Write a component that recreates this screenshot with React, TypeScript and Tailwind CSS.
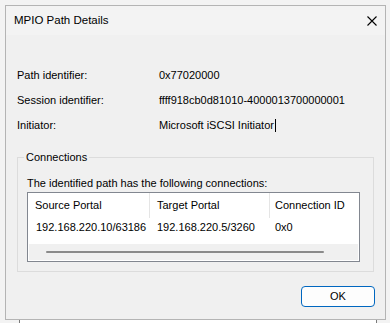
import React from 'react';

const rows = [
  { label: 'Path identifier:', value: '0x77020000' },
  { label: 'Session identifier:', value: 'ffff918cb0d81010-4000013700000001' },
  { label: 'Initiator:', value: 'Microsoft iSCSI Initiator', caret: true },
];

export default function App() {
  return (
    <div className="w-[390px] h-[323px] overflow-hidden bg-[#f3f3f3] pt-[5px] pl-[5px] text-black font-['Liberation_Sans',Arial,sans-serif]">
      {/* Dialog window */}
      <div className="w-[381px] h-[315px] border border-[#b4b4b4] bg-[#f0f0f0] flex flex-col">
        {/* Title bar */}
        <div className="h-[29px] shrink-0 bg-[#f3f3f3] flex items-center justify-between pl-[8px] pr-[8px]">
          <span className="text-[11.5px] leading-none">MPIO Path Details</span>
          <svg width="10" height="10" viewBox="0 0 10 10" className="block">
            <path d="M0.5 0.5 L9.5 9.5 M9.5 0.5 L0.5 9.5" stroke="#000" strokeWidth="1.1" fill="none" />
          </svg>
        </div>

        {/* Client area */}
        <div className="flex-1 flex flex-col px-[11px] pt-[28px] text-[11px]">
          <div className="grid grid-cols-[142px_1fr]">
            {rows.map((r) => (
              <React.Fragment key={r.label}>
                <div className="h-[25px] flex items-center">{r.label}</div>
                <div className="h-[25px] flex items-center">
                  {r.value}
                  {r.caret && <span className="inline-block w-px h-[13px] bg-black ml-px" />}
                </div>
              </React.Fragment>
            ))}
          </div>

          {/* Connections group box */}
          <fieldset className="mt-[12px] border border-[#dcdcdc] pl-[9px] pr-[13px] pb-[9px]">
            <legend className="-ml-[3px] px-[2px] leading-[14px]">Connections</legend>
            <div className="mt-[12px] leading-[14px]">The identified path has the following connections:</div>

            {/* List view */}
            <div className="mt-[2px] h-[70px] border border-[#828790] bg-white flex flex-col">
              <div className="h-[25px] flex shrink-0">
                <div className="w-[122px] border-r border-[#e5e5e5] pl-[7px] flex items-center">Source Portal</div>
                <div className="w-[120px] border-r border-[#e5e5e5] pl-[7px] flex items-center">Target Portal</div>
                <div className="flex-1 pl-[5px] flex items-center">Connection ID</div>
              </div>
              <div className="h-[18px] flex shrink-0">
                <div className="w-[122px] pl-[8px] flex items-center">192.168.220.10/63186</div>
                <div className="w-[120px] pl-[7px] flex items-center">192.168.220.5/3260</div>
                <div className="flex-1 pl-[5px] flex items-center">0x0</div>
              </div>
              <div className="flex-1" />
              {/* Horizontal scrollbar */}
              <div className="h-[16px] mx-px mb-px bg-[#f0f0f0] flex items-center shrink-0">
                <div className="ml-[17px] w-[278px] h-[2px] rounded-full bg-[#8a8a8a]" />
              </div>
            </div>
          </fieldset>

          <div className="mt-[14px] flex justify-end -mr-px">
            <button
              type="button"
              className="w-[74px] h-[21px] border border-[#0067c0] rounded-[4px] bg-[#fdfdfd] text-[11px] leading-none flex items-center justify-center"
            >
              OK
            </button>
          </div>
        </div>
      </div>

      {/* Edge of the window behind */}
      <div className="ml-[14px] w-[358px] h-[3px] border-x border-[#7a7a7a] bg-white" />
    </div>
  );
}
